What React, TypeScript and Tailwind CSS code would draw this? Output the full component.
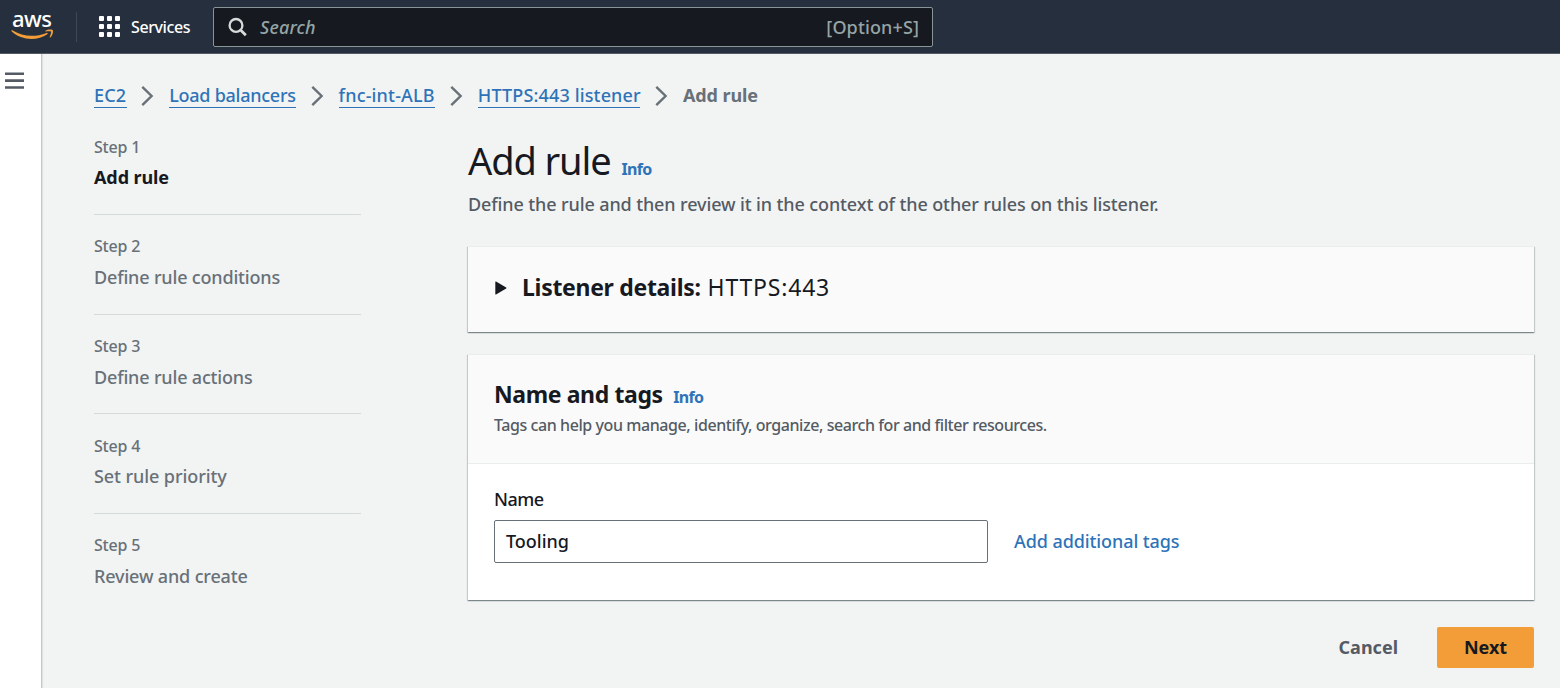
import React from "react";

const links = [
  { label: "EC2", cls: "w-[32.700px] tracking-[0.1px]" },
  { label: "Load balancers", cls: "w-[126.900px] tracking-[-0.26px]" },
  { label: "fnc-int-ALB", cls: "w-[96.700px] tracking-[0.17px]" },
  { label: "HTTPS:443 listener", cls: "w-[162.700px] tracking-[0.15px]" },
];

const steps = [
  { title: "Add rule", row: "h-[79px] border-b", cls: "mt-[5px] font-bold text-[#16191f] tracking-[-0.1px]" },
  { title: "Define rule conditions", row: "h-[100px] border-b pt-[20px]", cls: "mt-[6px] text-[#687078] tracking-[-0.17px]" },
  { title: "Define rule actions", row: "h-[99px] border-b pt-[20px]", cls: "mt-[6px] text-[#687078] tracking-[-0.17px]" },
  { title: "Set rule priority", row: "h-[100px] border-b pt-[21px]", cls: "mt-[5px] text-[#687078] tracking-[-0.08px]" },
  { title: "Review and create", row: "h-[99px] pt-[20px]", cls: "mt-[6px] text-[#687078] tracking-[-0.15px]" },
];

const cardShadow =
  "shadow-[0_1px_1px_0_rgba(0,28,36,0.3),1px_1px_1px_0_rgba(0,28,36,0.15),-1px_1px_1px_0_rgba(0,28,36,0.15)] border-t border-[#eaeded]";

function Chevron() {
  return (
    <svg className="mx-[14.750px] mt-[9.500px] h-[20px] w-[13px] shrink-0" viewBox="0 0 13 20" fill="none" stroke="#687078" strokeWidth="2.4">
      <path d="M1.3.9 10.600 10 1.3 19.100" />
    </svg>
  );
}

function Header() {
  return (
    <header className="flex h-[54px] shrink-0 border-b border-[#545b64] bg-[#252f3e]">
      <div className="ml-[11px] w-[43px] pt-[8px]">
        <div className="h-[21px] pl-[1px] whitespace-nowrap text-[22px] leading-[21px] font-medium tracking-[-0.6px] text-white">aws</div>
        <svg className="h-[11px] w-[43px]" viewBox="0 0 43 11" fill="#f29d38">
          <path d="M.4 1.6C.7 1.1 1.2 1.1 1.8 1.5 7.500 4.900 13.800 6.800 20.600 6.800 25.500 6.800 30.600 5.800 35.500 3.900 36.500 3.500 37.200 4.500 36.300 5.200 32 8.400 26 10 20.600 10 13 10 6 7.200.8 2.500.4 2.100.2 1.900.4 1.600Z" />
          <path d="M34.400 1.700C36.400.300 39.500.100 41.300.700 42.600 1.100 42.200 6 39.400 8.400 38.900 8.800 38.500 8.600 38.700 8.100 39.300 6.500 40.500 3.300 40 2.600 39.500 1.900 36.300 2.200 34.900 2.400 34.300 2.400 34.100 2 34.400 1.700Z" />
        </svg>
      </div>
      <div className="mt-[12px] ml-[22px] h-[30px] w-px bg-[#3f4856]" />
      <div className="mt-[16px] ml-[22px] grid h-[21px] w-[21px] grid-cols-3 gap-[3px]">
        {Array.from({ length: 9 }, (_, i) => (
          <span key={i} className="h-[5px] w-[5px] rounded-[1px] bg-white" />
        ))}
      </div>
      <div className="ml-[11px] w-[82px] text-[16px] leading-[55px] font-medium tracking-[-0.4px] text-white">Services</div>
      <div className="mt-[7px] flex h-[40px] w-[720px] items-center rounded-[2px] border border-[#879596] bg-[#16191f]">
        <svg className="ml-[14px] h-[20px] w-[20px]" viewBox="0 0 20 20" fill="none" stroke="#d5dbdb" strokeWidth="2.3">
          <circle cx="8" cy="8.400" r="6.400" />
          <path d="m12.600 13 5.200 5.200" strokeWidth="2.800" />
        </svg>
        <span className="ml-[12px] text-[18px] tracking-[0.2px] text-[#95a5a6] italic">Search</span>
        <span className="mr-[13px] ml-auto text-[18px] tracking-[0.13px] text-[#95a5a6]">[Option+S]</span>
      </div>
    </header>
  );
}

export default function App() {
  return (
    <div className="flex h-[688px] w-[1560px] flex-col overflow-hidden bg-[#f2f3f3] font-['Noto_Sans','Open_Sans',sans-serif] font-medium text-[#16191f]">
      <Header />
      <div className="flex flex-1">
        <aside className="w-[42px] shrink-0 border-r border-[#c3c7c8] bg-white pt-[18px] pl-[5px] shadow-[1px_0_1px_rgba(0,28,36,0.08)]">
          <svg className="h-[18px] w-[19px]" viewBox="0 0 19 18" fill="#545b64">
            <path d="M0 .4h19v2.600H0zM0 7.300h19v2.600H0zM0 14.200h19v2.600H0z" />
          </svg>
        </aside>
        <div className="flex w-[1440px] flex-col pt-[22px] pl-[52px]">
          <nav className="flex h-[50px] items-start text-[18px] whitespace-nowrap">
            {links.map((l) => (
              <React.Fragment key={l.label}>
                <a className={`mt-[7px] h-[25px] shrink-0 border-b border-[#2e73b8] leading-[25px] text-[#2e73b8] ${l.cls}`}>{l.label}</a>
                <Chevron />
              </React.Fragment>
            ))}
            <span className="mt-[7px] leading-[25px] font-bold tracking-[-0.1px] text-[#687078]">Add rule</span>
          </nav>
          <div className="flex">
            <ol className="w-[267px] shrink-0 pt-[10px]">
              {steps.map((s, i) => (
                <li key={s.title} className={`border-[#d5dbdb] ${s.row}`}>
                  <div className="text-[16px] leading-[22px] tracking-[-0.2px] text-[#687078]">Step {i + 1}</div>
                  <div className={`text-[18px] leading-[28px] ${s.cls}`}>{s.title}</div>
                </li>
              ))}
            </ol>
            <main className="ml-[107px] w-[1066px] shrink-0 whitespace-nowrap">
              <div className="flex h-[66px] items-baseline">
                <h1 className="text-[38px] leading-[69px] font-normal tracking-[-1.1px]">Add rule</h1>
                <a className="ml-[11px] text-[16px] font-bold tracking-[-0.7px] text-[#2e73b8]">Info</a>
              </div>
              <p className="h-[55px] text-[18px] leading-[25px] tracking-[-0.115px] text-[#545b64]">
                Define the rule and then review it in the context of the other rules on this listener.
              </p>
              <section className={`-mt-px flex h-[86px] items-center bg-[#fafafa] pb-[5px] pl-[27px] ${cardShadow}`}>
                <svg className="mt-px h-[14px] w-[12px]" viewBox="0 0 12 14" fill="#16191f">
                  <path d="M1 .5 11.200 6.500Q11.800 7 11.200 7.500L1 13.500Q.3 13.800.3 13V1Q.3.200 1 .5Z" />
                </svg>
                <h2 className="ml-[15px] flex gap-[7px] text-[23px] leading-[30px]">
                  <b className="tracking-[-0.3px]">Listener details:</b>
                  <span className="font-normal tracking-[0.8px]">HTTPS:443</span>
                </h2>
              </section>
              <section className={`mt-[22px] h-[246px] bg-white ${cardShadow}`}>
                <div className="h-[109px] border-b border-[#eaeded] bg-[#fafafa] pt-[23px] pl-[26px]">
                  <div className="flex h-[35px] items-baseline">
                    <h2 className="text-[23px] leading-[32px] font-bold tracking-[-0.38px]">Name and tags</h2>
                    <a className="ml-[10.500px] text-[16px] font-bold tracking-[-0.7px] text-[#2e73b8]">Info</a>
                  </div>
                  <p className="text-[16px] leading-[24px] tracking-[-0.425px] text-[#545b64]">
                    Tags can help you manage, identify, organize, search for and filter resources.
                  </p>
                </div>
                <div className="pt-[23px] pl-[26px]">
                  <label className="block h-[33px] text-[18px] leading-[25px] tracking-[-0.5px]">Name</label>
                  <div className="flex items-center text-[18px]">
                    <div className="flex h-[43px] w-[494px] items-center rounded-[2px] border border-[#687078] bg-white pl-[11px] tracking-[0px]">Tooling</div>
                    <a className="ml-[26px] tracking-[-0.09px] text-[#2e73b8]">Add additional tags</a>
                  </div>
                </div>
              </section>
              <div className="mt-[27px] flex h-[41px] items-center justify-end text-[18px] font-bold">
                <button className="mr-[39px] tracking-[0px] text-[#545b64]">Cancel</button>
                <button className="h-[41px] w-[97px] rounded-[2px] bg-[#f29d38] tracking-[0px]">Next</button>
              </div>
            </main>
          </div>
        </div>
      </div>
    </div>
  );
}
